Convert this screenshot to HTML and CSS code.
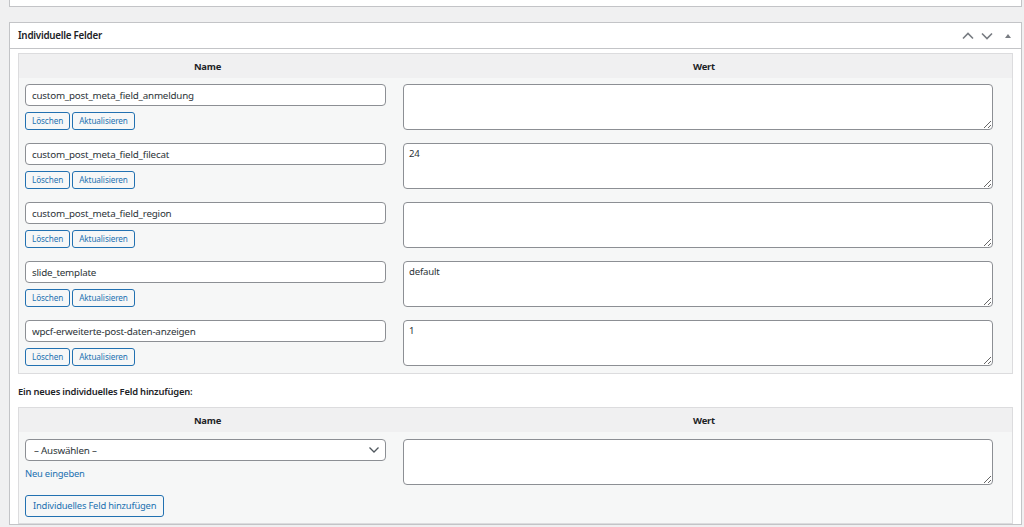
FILE: index.html
```
<!DOCTYPE html>
<html lang="de">
<head>
<meta charset="utf-8">
<title>Individuelle Felder</title>
<link rel="stylesheet" href="styles.css">
</head>
<body>
<div class="page">
  <div class="postbox postbox-top"></div>
  <div class="postbox">
    <div class="postbox-header">
      <h2 class="postbox-title">Individuelle Felder</h2>
      <div class="handles">
        <svg class="handle" width="14" height="10" viewBox="0 0 14 10"><path d="M2 7.5 L7 2.5 L12 7.5" fill="none" stroke="#787c82" stroke-width="1.6"/></svg>
        <svg class="handle" width="14" height="10" viewBox="0 0 14 10"><path d="M2 2.5 L7 7.5 L12 2.5" fill="none" stroke="#787c82" stroke-width="1.6"/></svg>
        <svg class="handle toggle" width="10" height="10" viewBox="0 0 10 10"><path d="M2 7 L5 3 L8 7 Z" fill="#787c82"/></svg>
      </div>
    </div>
    <div class="inside">
      <table class="meta">
        <colgroup><col class="col-name"><col class="col-value"></colgroup>
        <thead>
          <tr><th>Name</th><th>Wert</th></tr>
        </thead>
        <tbody>
          <tr>
            <td class="cell-name">
              <input class="field" type="text" value="custom_post_meta_field_anmeldung">
              <div class="actions"><button class="btn-small">Löschen</button><button class="btn-small">Aktualisieren</button></div>
            </td>
            <td class="cell-value"><textarea class="value"></textarea></td>
          </tr>
          <tr>
            <td class="cell-name">
              <input class="field" type="text" value="custom_post_meta_field_filecat">
              <div class="actions"><button class="btn-small">Löschen</button><button class="btn-small">Aktualisieren</button></div>
            </td>
            <td class="cell-value"><textarea class="value">24</textarea></td>
          </tr>
          <tr>
            <td class="cell-name">
              <input class="field" type="text" value="custom_post_meta_field_region">
              <div class="actions"><button class="btn-small">Löschen</button><button class="btn-small">Aktualisieren</button></div>
            </td>
            <td class="cell-value"><textarea class="value"></textarea></td>
          </tr>
          <tr>
            <td class="cell-name">
              <input class="field" type="text" value="slide_template">
              <div class="actions"><button class="btn-small">Löschen</button><button class="btn-small">Aktualisieren</button></div>
            </td>
            <td class="cell-value"><textarea class="value">default</textarea></td>
          </tr>
          <tr>
            <td class="cell-name">
              <input class="field" type="text" value="wpcf-erweiterte-post-daten-anzeigen">
              <div class="actions"><button class="btn-small">Löschen</button><button class="btn-small">Aktualisieren</button></div>
            </td>
            <td class="cell-value"><textarea class="value">1</textarea></td>
          </tr>
        </tbody>
      </table>

      <p class="add-title">Ein neues individuelles Feld hinzufügen:</p>

      <table class="meta meta-new">
        <colgroup><col class="col-name"><col class="col-value"></colgroup>
        <thead>
          <tr><th>Name</th><th>Wert</th></tr>
        </thead>
        <tbody>
          <tr>
            <td class="cell-name">
              <div class="select-wrap">
                <select class="field select"><option>– Auswählen –</option></select>
                <svg class="select-arrow" width="12" height="8" viewBox="0 0 12 8"><path d="M1.5 1.5 L6 6 L10.5 1.5" fill="none" stroke="#50575e" stroke-width="1.3"/></svg>
              </div>
              <a class="link" href="#">Neu eingeben</a>
              <div class="submit"><button class="btn">Individuelles Feld hinzufügen</button></div>
            </td>
            <td class="cell-value"><textarea class="value"></textarea></td>
          </tr>
        </tbody>
      </table>
    </div>
  </div>
</div>
</body>
</html>
```
FILE: styles.css
```
* { box-sizing: border-box; }
html, body {
  margin: 0;
  padding: 0;
  background: #f0f0f1;
  font-family: "Noto Sans", "Open Sans", sans-serif;
  color: #1d2327;
  overflow: hidden;
}
.page {
  padding: 0 2px 0 9px;
}
.postbox {
  background: #fff;
  border: 1px solid #c3c4c7;
  margin-top: 15px;
}
.postbox-top {
  margin-top: 0;
  height: 7px;
  border-top: none;
}
.postbox-header {
  display: flex;
  align-items: center;
  justify-content: space-between;
  height: 26px;
  border-bottom: 1px solid #c3c4c7;
  padding: 0 0 0 8px;
}
.postbox-title {
  margin: 0;
  font-size: 9.8px;
  font-weight: 600;
  letter-spacing: -0.25px;
  line-height: 14px;
}
.handles {
  display: flex;
  align-items: center;
  gap: 5px;
  padding-right: 8px;
}
.handle { display: block; }
.toggle { margin-left: 4px; }

.inside {
  padding: 4px 8px 0 8px;
}
.meta {
  width: 100%;
  border: 1px solid #dcdcde;
  border-spacing: 0;
  background: #f6f7f7;
  table-layout: fixed;
}
.col-name { width: 377px; }
.meta th {
  background: #f0f0f1;
  font-size: 9.4px;
  font-weight: 700;
  letter-spacing: -0.2px;
  height: 24px;
  padding: 0;
  text-align: center;
  color: #1d2327;
}
.meta td {
  vertical-align: top;
  padding: 6px 0 7px 0;
}
.cell-name { padding-left: 6px !important; }
.cell-value { padding-left: 7px !important; }

.field {
  display: block;
  width: 361px;
  height: 22px;
  margin: 0 0 6px 0;
  border: 1px solid #8c8f94;
  border-radius: 4px;
  background: #fff;
  padding: 0 6px;
  font-family: inherit;
  font-size: 9.8px;
  letter-spacing: -0.2px;
  color: #2c3338;
}
.actions {
  display: flex;
  gap: 2px;
}
.btn-small {
  height: 18px;
  padding: 0 6px;
  border: 1px solid #2271b1;
  border-radius: 3px;
  background: #f6f7f7;
  color: #2271b1;
  font-family: inherit;
  font-size: 8.2px;
  letter-spacing: -0.1px;
  line-height: 16px;
}
.value {
  display: block;
  width: 590px;
  height: 46px;
  border: 1px solid #8c8f94;
  border-radius: 4px;
  background: #fff;
  padding: 3px 5px;
  font-family: inherit;
  font-size: 9.6px;
  letter-spacing: -0.2px;
  color: #2c3338;
  margin: 0;
}
.add-title {
  margin: 10px 0 7px 0;
  font-size: 9.4px;
  font-weight: 600;
  letter-spacing: -0.2px;
  line-height: 16px;
}
.meta-new td { padding-top: 7px; padding-bottom: 6px; }
.select-wrap {
  position: relative;
  width: 361px;
}
.select {
  appearance: none;
  -webkit-appearance: none;
  padding-left: 8px;
}
.select-arrow {
  position: absolute;
  right: 6px;
  top: 7px;
}
.link {
  display: block;
  margin-top: 0;
  font-size: 9.4px;
  letter-spacing: -0.2px;
  line-height: 14px;
  color: #2271b1;
  text-decoration: none;
}
.submit {
  margin-top: 11px;
}
.btn {
  height: 22px;
  padding: 0 7px;
  border: 1px solid #2271b1;
  border-radius: 3px;
  background: #f6f7f7;
  color: #2271b1;
  font-family: inherit;
  font-size: 9.4px;
  letter-spacing: -0.2px;
}
```
